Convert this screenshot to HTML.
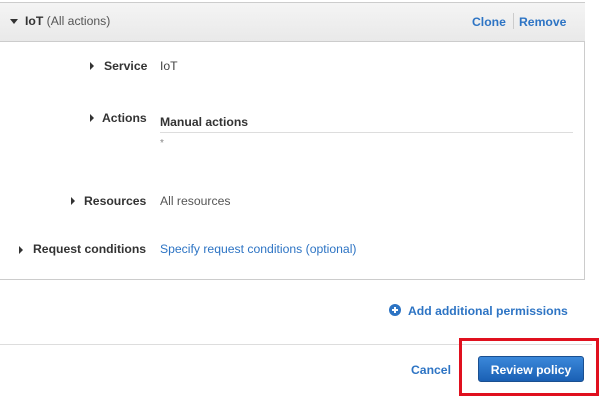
<!DOCTYPE html>
<html><head><style>
body{margin:0;width:600px;height:400px;background:#fff;font-family:"Liberation Sans",Arial,sans-serif;font-size:12.2px;color:#444;position:relative;overflow:hidden}
.a{position:absolute;white-space:nowrap}
.b{font-weight:bold;color:#333}
.l{color:#2d74c4}
.tri{position:absolute;width:0;height:0;border-top:4px solid transparent;border-bottom:4px solid transparent;border-left:4px solid #333}
</style></head><body>
<div class="a" style="left:-1px;top:2px;width:585px;height:276px;border:1px solid #ccc;border-left:none"></div>
<div class="a" style="left:0;top:3px;width:585px;height:38px;background:linear-gradient(#f4f4f4,#e9e9e9);border-bottom:1px solid #ccc"></div>
<div class="a" style="left:10px;top:19px;width:0;height:0;border-left:4px solid transparent;border-right:4px solid transparent;border-top:5px solid #333"></div>
<div class="a" style="left:25px;top:14px"><span class="b">IoT</span> <span style="color:#555">(All actions)</span></div>
<div class="a b l" style="left:472px;top:15px;color:#2d74c4">Clone</div>
<div class="a" style="left:513px;top:13px;width:1px;height:16px;background:#ccc"></div>
<div class="a b" style="left:519px;top:15px;color:#2d74c4">Remove</div>

<div class="tri" style="left:90px;top:62px"></div>
<div class="a b" style="left:104px;top:59px">Service</div>
<div class="a" style="left:160px;top:59px">IoT</div>

<div class="tri" style="left:90px;top:114px"></div>
<div class="a b" style="left:102px;top:111px">Actions</div>
<div class="a b" style="left:160px;top:115px">Manual actions</div>
<div class="a" style="left:160px;top:132px;width:413px;height:1px;background:#ddd"></div>
<div class="a" style="left:160px;top:138px;font-size:10px;color:#888">*</div>

<div class="tri" style="left:71px;top:197px"></div>
<div class="a b" style="left:84px;top:194px">Resources</div>
<div class="a" style="left:160px;top:194px;color:#555">All resources</div>

<div class="tri" style="left:19px;top:246px"></div>
<div class="a b" style="left:33px;top:242px">Request conditions</div>
<div class="a l" style="left:160px;top:242px">Specify request conditions (optional)</div>

<svg class="a" style="left:389px;top:304px" width="12" height="12"><circle cx="6" cy="6" r="6" fill="#2d74c4"/><path d="M6 3v6M3 6h6" stroke="#fff" stroke-width="2"/></svg>
<div class="a b" style="left:408px;top:304px;color:#2d74c4">Add additional permissions</div>

<div class="a" style="left:0;top:344px;width:592px;height:1px;background:#ddd"></div>
<div class="a b" style="left:411px;top:363px;color:#2d74c4">Cancel</div>
<div class="a" style="left:459px;top:338px;width:134px;height:52px;border:3px solid #e0101e"></div>
<div class="a b" style="left:478px;top:356px;width:106px;height:26px;background:linear-gradient(#3b88da,#1a60b4);border:1px solid #1a4f90;border-radius:3px;color:#fff;text-align:center;line-height:26px;box-sizing:border-box">Review policy</div>
</body></html>
